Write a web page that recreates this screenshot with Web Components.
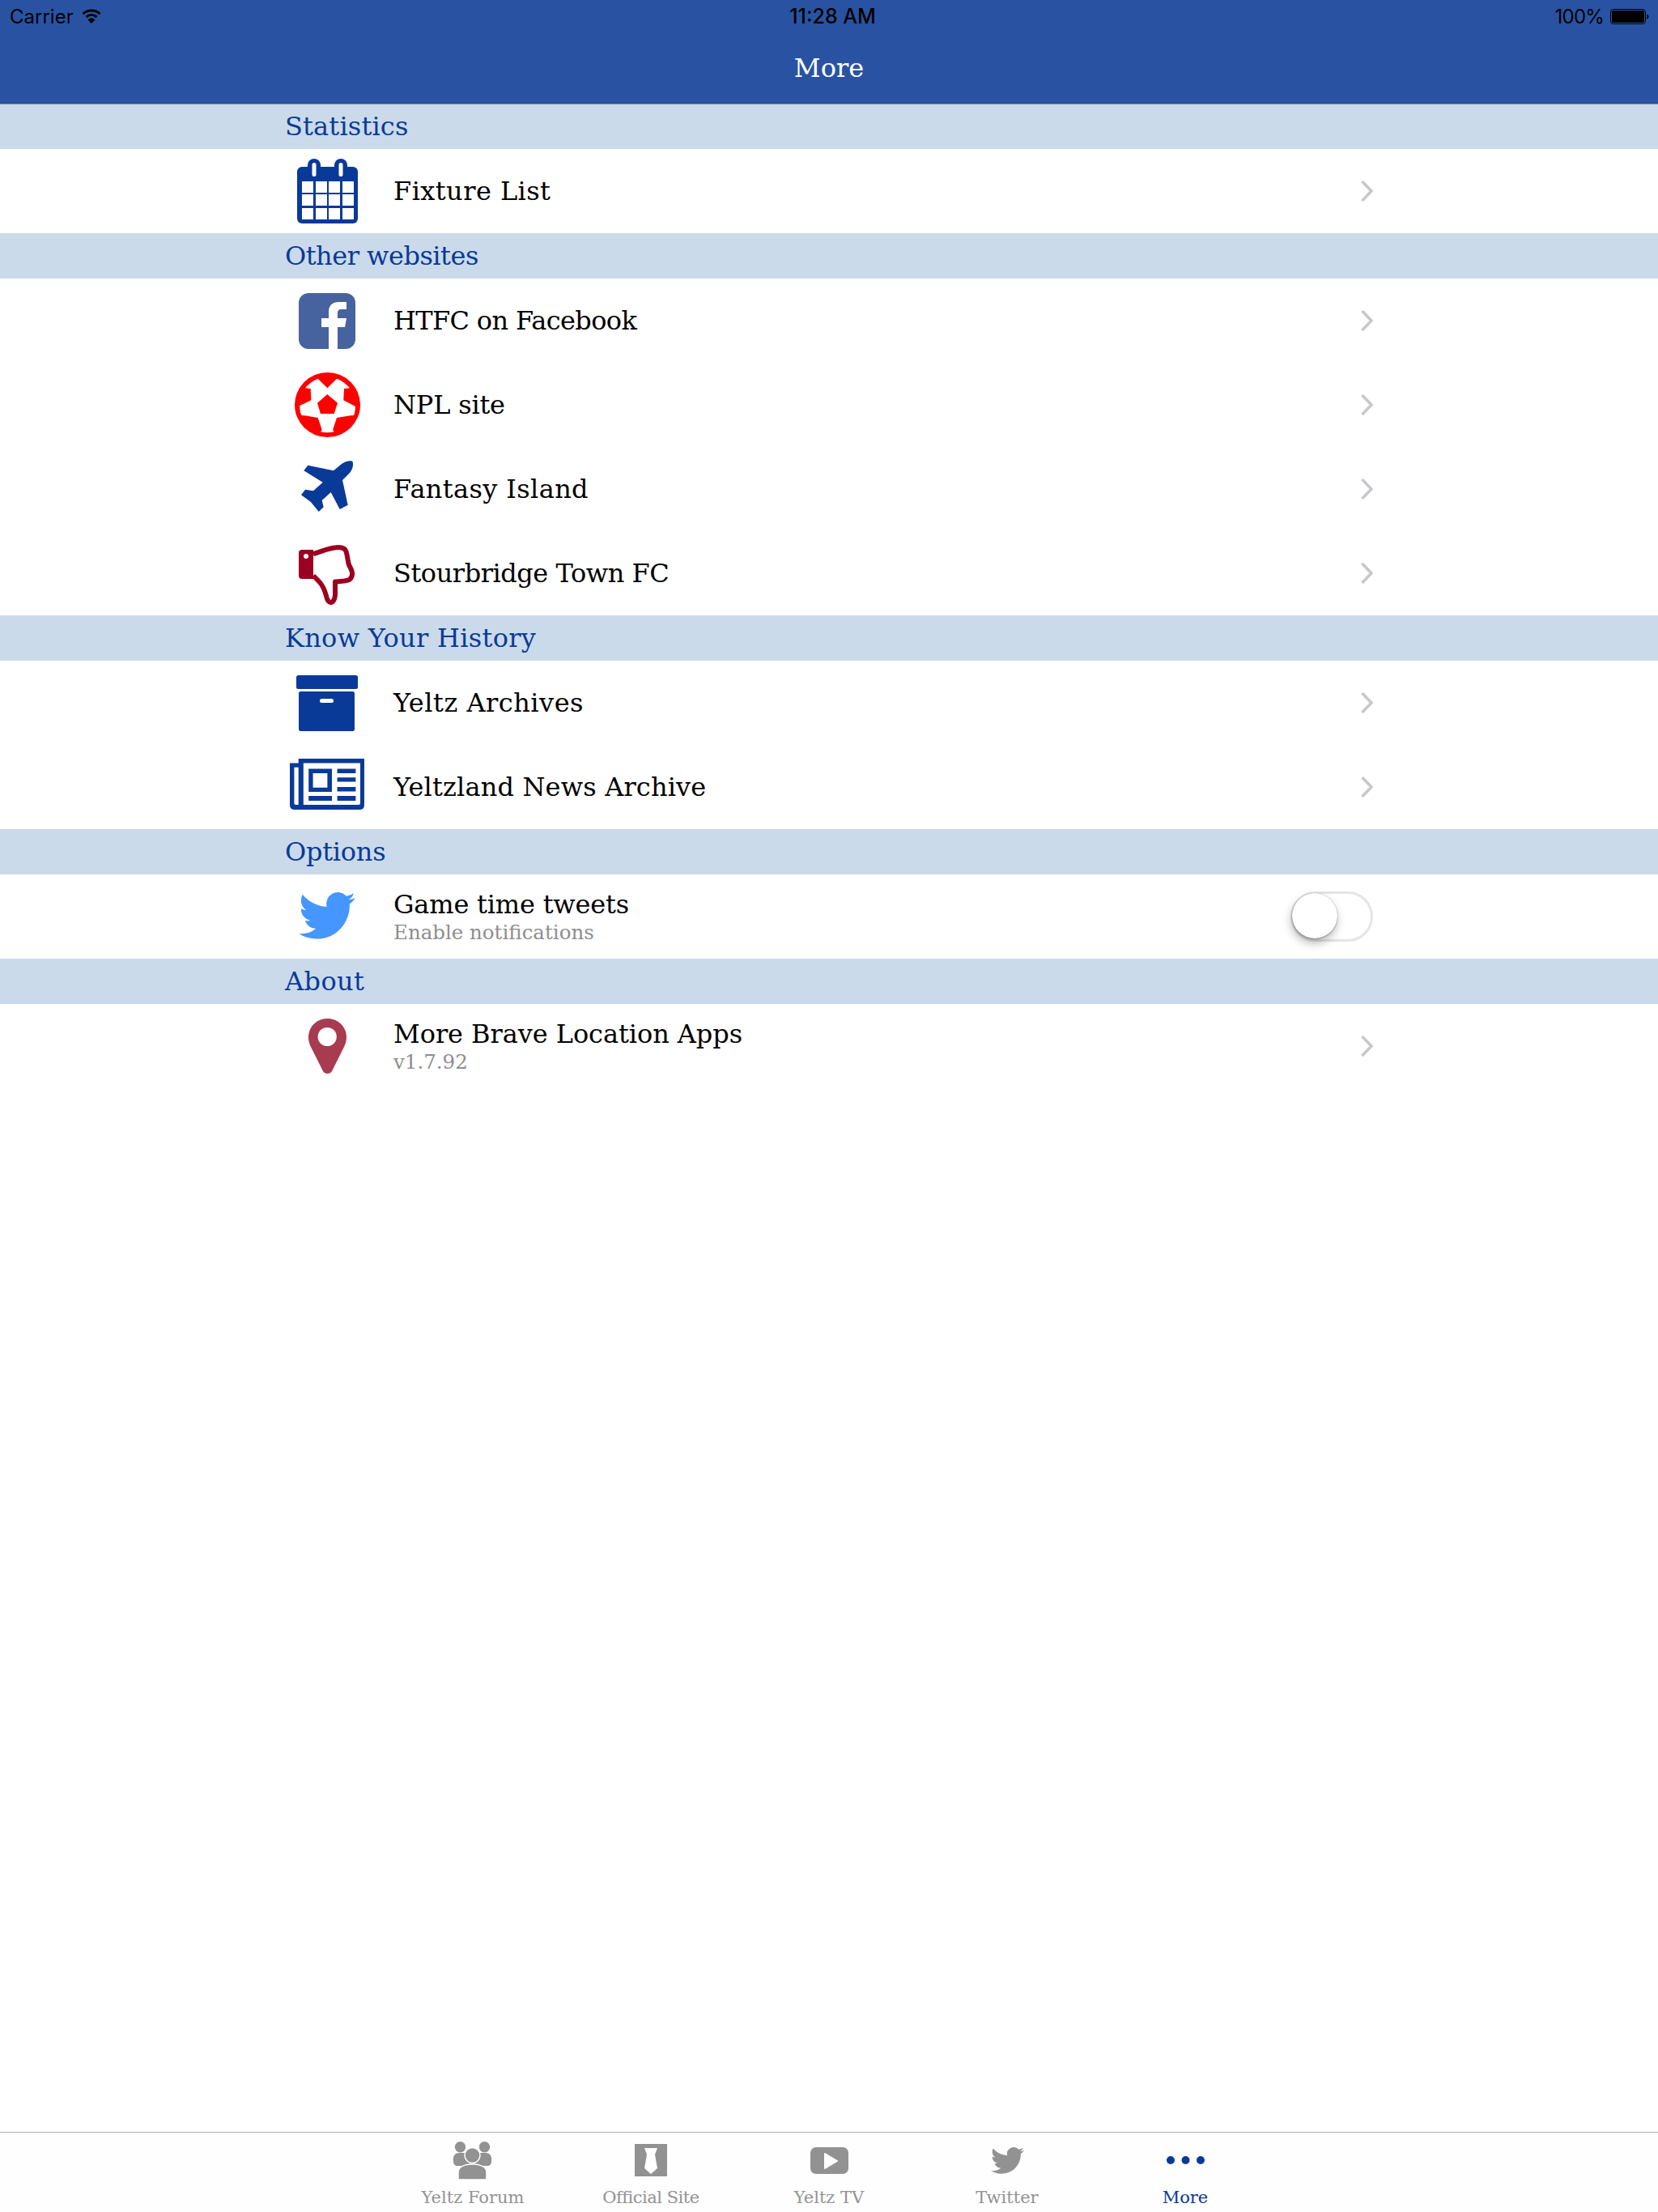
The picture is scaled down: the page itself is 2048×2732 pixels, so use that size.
<!DOCTYPE html>
<html lang="en">
<head>
<meta charset="utf-8">
<title>More</title>
<style>
    html, body { margin: 0; padding: 0; background: #fff; }
    body {
        width: 2048px;
        height: 2732px;
        display: flex;
        flex-direction: column;
        font-family: "DejaVu Serif", serif;
    }
    more-list { flex: 1; }
</style>
</head>
<body>
<nav-header title="More"></nav-header>
<more-list>
    <section-title style="--track:.17px">Statistics</section-title>
    <more-row label="Fixture List" style="--track:.44px"><more-icon name="calendar"></more-icon></more-row>
    <section-title style="--track:-.5px">Other websites</section-title>
    <more-row label="HTFC on Facebook" style="--track:-.65px"><more-icon name="facebook"></more-icon></more-row>
    <more-row label="NPL site" style="--track:-.2px"><more-icon name="ball"></more-icon></more-row>
    <more-row label="Fantasy Island" style="--track:.37px"><more-icon name="plane"></more-icon></more-row>
    <more-row label="Stourbridge Town FC" style="--track:-.46px"><more-icon name="thumb"></more-icon></more-row>
    <section-title style="--track:.3px">Know Your History</section-title>
    <more-row label="Yeltz Archives" style="--track:.5px"><more-icon name="box"></more-icon></more-row>
    <more-row label="Yeltzland News Archive" style="--track:.16px"><more-icon name="news"></more-icon></more-row>
    <section-title style="--track:-.25px">Options</section-title>
    <more-row label="Game time tweets" detail="Enable notifications" no-chevron style="--track:-.2px">
        <more-icon name="twitter"></more-icon>
        <toggle-switch slot="accessory"></toggle-switch>
    </more-row>
    <section-title style="--track:.4px">About</section-title>
    <more-row label="More Brave Location Apps" detail="v1.7.92" style="--track:-.07px"><more-icon name="pin"></more-icon></more-row>
</more-list>
<tab-bar>
    <tab-item label="Yeltz Forum"><more-icon name="people"></more-icon></tab-item>
    <tab-item label="Official Site" style="--track:-.5px"><more-icon name="tie"></more-icon></tab-item>
    <tab-item label="Yeltz TV"><more-icon name="play"></more-icon></tab-item>
    <tab-item label="Twitter"><more-icon name="tabbird"></more-icon></tab-item>
    <tab-item label="More" active><more-icon name="dots"></more-icon></tab-item>
</tab-bar>

<script>
const BLUE = '#0a3a98';
const BIRD = 'M23.953 4.57a10 10 0 01-2.825.775 4.958 4.958 0 002.163-2.723c-.951.555-2.005.959-3.127 1.184a4.92 4.92 0 00-8.384 4.482C7.69 8.095 4.067 6.13 1.64 3.162a4.822 4.822 0 00-.666 2.475c0 1.71.87 3.213 2.188 4.096a4.904 4.904 0 01-2.228-.616v.06a4.923 4.923 0 003.946 4.827 4.996 4.996 0 01-2.212.085 4.936 4.936 0 004.604 3.417 9.867 9.867 0 01-6.102 2.105c-.39 0-.779-.023-1.17-.067a13.995 13.995 0 007.557 2.209c9.053 0 13.998-7.496 13.998-13.985 0-.21 0-.42-.015-.63A9.935 9.935 0 0024 4.59z';

// [width, height, svg body, margin] - sizes measured off the reference,
// margin nudges the icons that don't sit dead centre in their row
const ICONS = {
    calendar: [75, 80, `
        <rect y="10" width="75" height="70" rx="6" fill="${BLUE}"/>
        <rect x="13" width="16" height="24" rx="8" fill="${BLUE}"/>
        <rect x="46" width="16" height="24" rx="8" fill="${BLUE}"/>
        <rect x="18.5" y="5" width="5" height="17" rx="2.5" fill="#fff"/>
        <rect x="51.5" y="5" width="5" height="17" rx="2.5" fill="#fff"/>
        ${[28, 44, 61].map(y => [6, 23, 39, 56].map(x => `<rect x="${x}" y="${y}" width="14" height="14" fill="#fff"/>`).join('')).join('')}`],
    facebook: [70, 69, `
        <rect width="70" height="69" rx="12" fill="#47639f"/>
        <path fill="#fff" d="M37 69V42H28V31H37V23C37 15 42 11 49 11H59V20H53C49 20 48 22 48 25V31H59L57 42H48V69Z"/>`],
    ball: [81, 80, `
        <ellipse cx="40.5" cy="40" rx="40.5" ry="40" fill="#fe0000"/>
        <path fill="#fff" d="M28.7 7.7L40.3 19.3L52 7.7Q61 11 68 19.3L61 20L60.3 34.3L75 42Q75 48 73 53L68.7 53.3L52 56L47 71L48.7 73.3Q40 75 32 73.3L33.7 71L28.7 56L13 53.3L8.5 53Q6 48 6.3 41L20.3 34.3L19.7 20L13 19.3Q20 11 28.7 7.7Z"/>
        <path fill="#fe0000" d="M40.3 27L53 37.7L48.7 51H32L28 37.7Z"/>`],
    plane: [64, 63, `
        <path fill="${BLUE}" d="M40 12.3L8.3 5.7L3.3 12.3L26.7 26.7L15 37.3L5 35.7L0 42.3L11.7 50.7L21.7 63L27.7 57.3L25.7 49L36.7 39L47.7 60L57.7 54.7L51 24L60 15C64 10 65 4 63.3 .7C60 -.5 54 1 50 4Z"/>`, '0 0 7px'],
    thumb: [70, 74, `
        <path fill="none" stroke="#9b0020" stroke-width="6" stroke-linejoin="round" d="M18 11C26 9 36 4 46 3.2C52 2.5 57 4 58.5 8C60 13 60.5 18 61.5 23C62.5 27 65.5 30 66 34C66.5 38 65 41 62.5 43C58 45 52 45 45 45.5L45 62C44.5 68 42 71 39.5 71C37 71 35 68 34 63C32 55 29 49 24 44L18 38"/>
        <path fill="#9b0020" d="M4 6H18V42H4Q0 42 0 38V10Q0 6 4 6Z"/>
        <circle cx="9" cy="14" r="3" fill="#fff"/>`, '4px 0 0'],
    box: [76, 69, `
        <rect width="76" height="17" rx="2.5" fill="${BLUE}"/>
        <rect x="3" y="20" width="69" height="49" rx="2.5" fill="${BLUE}"/>
        <rect x="29" y="29" width="17" height="5" rx="2.5" fill="#fff"/>`],
    news: [92, 63, `
        <path fill="${BLUE}" fill-rule="evenodd" d="M10.7 0H92V57Q92 63 86 63H6Q0 63 0 57V5.4H10.7ZM16.8 5.4V57H85Q87 57 87 55V5.4ZM5.4 10.7V55Q5.4 57 7.5 57H10.7V10.7Z"/>
        <path fill="${BLUE}" fill-rule="evenodd" d="M23.2 12.5H52V41H23.2ZM28.6 17.9V35.7H46.4V17.9Z"/>
        <path fill="${BLUE}" d="M58.6 12.5H81.4V17.9H58.6ZM58.6 23.2H81.4V28.6H58.6ZM58.6 35H81.4V40.4H58.6ZM58.6 46H81.4V52H58.6ZM23.2 46H52V52H23.2Z"/>`, '0 0 7px'],
    twitter: [70, 58, `
        <svg viewBox="0 2.2 24 19.7" width="70" height="58" preserveAspectRatio="none"><path fill="#4696ff" d="${BIRD}"/></svg>`, '0 0 2px'],
    pin: [47, 69, `
        <path fill="#a83b50" d="M23.5 0C10.5 0 0 10 0 23C0 30 3 35 6 41L18 65C20 69 27 69 29 65L41 41C44 35 47 30 47 23C47 10 36.5 0 23.5 0Z"/>
        <circle cx="23.2" cy="22.5" r="11.6" fill="#fff"/>`],
    people: [50, 47, `
        <g fill="#929292">
            <circle cx="9.5" cy="6.7" r="6.7"/>
            <circle cx="39.5" cy="6.7" r="6.7"/>
            <path d="M1 24C0 18 3 14 8 14H41C46 14 49 18 48 24C48 28 46 30 43 30H6C3 30 1 28 1 24Z"/>
        </g>
        <g fill="#929292" stroke="#fefefe" stroke-width="1.5">
            <circle cx="24.5" cy="17" r="9.5"/>
            <path d="M7 47V38C7 31 15 28 24.5 28C34 28 42 31 42 38V45Q42 47 40 47H9Q7 47 7 45Z"/>
        </g>`],
    tie: [40, 40, `
        <rect width="40" height="40" fill="#929292"/>
        <path fill="#fff" d="M12 5H28L25 13L28 30L20 37L12 30L15 13Z"/>`],
    play: [47, 33, `
        <rect width="47" height="33" rx="7" fill="#929292"/>
        <path fill="#fff" stroke="#fff" stroke-width="2" stroke-linejoin="round" d="M18 8L33 17L18 26Z"/>`],
    tabbird: [41, 33, `
        <svg viewBox="0 2.2 24 19.7" width="41" height="33" preserveAspectRatio="none"><path fill="#929292" d="${BIRD}"/></svg>`],
    dots: [47, 10, `
        <circle cx="5" cy="5" r="5" fill="${BLUE}"/>
        <circle cx="23.5" cy="5" r="5" fill="${BLUE}"/>
        <circle cx="42" cy="5" r="5" fill="${BLUE}"/>`],
};

class MoreIcon extends HTMLElement {
    connectedCallback() {
        const [w, h, body, margin] = ICONS[this.getAttribute('name')];
        this.attachShadow({ mode: 'open' }).innerHTML = `
            <style>
                :host { display: block; line-height: 0; margin: ${margin || 0}; }
                svg { display: block; overflow: visible; }
            </style>
            <svg width="${w}" height="${h}" viewBox="0 0 ${w} ${h}">${body}</svg>`;
    }
}

class NavHeader extends HTMLElement {
    connectedCallback() {
        this.attachShadow({ mode: 'open' }).innerHTML = `
            <style>
                /* hairline hangs over the first section header */
                :host { display: block; position: relative; background: #2953a2; box-shadow: 0 1px 0 #7d8ca8; }
                .status {
                    height: 40px;
                    padding: 0 11px 0 12px;
                    display: grid;
                    grid-template-columns: 1fr auto 1fr;
                    align-items: center;
                    font-family: Inter, sans-serif;
                    font-size: 24px;
                    color: #000;
                }
                .left, .right { display: flex; align-items: center; }
                .left { gap: 10px; }
                .right { justify-content: flex-end; gap: 8px; }
                .pct { letter-spacing: -.8px; }
                .time { font-size: 25px; font-weight: 500; margin-left: 8px; }
                .title {
                    height: 88px;
                    padding-bottom: 1px;
                    box-sizing: border-box;
                    display: flex;
                    align-items: center;
                    justify-content: center;
                    color: #fff;
                    font-size: 32px;
                }
            </style>
            <div class="status">
                <div class="left">
                    <span>Carrier</span>
                    <svg width="24" height="18" viewBox="0 0 24 18">
                        <path fill="none" stroke="#000" stroke-width="3" d="M1.5 6C7.5 .8 16.5 .8 22.5 6M5.5 10C9.5 6.5 14.5 6.5 18.5 10"/>
                        <path d="M7.5 13.5C10.5 10.5 13.5 10.5 16.5 13.5L12 18Z"/>
                    </svg>
                </div>
                <div class="time">11:28 AM</div>
                <div class="right">
                    <span class="pct">100%</span>
                    <svg width="48" height="19" viewBox="0 0 48 19">
                        <rect x=".5" y=".5" width="43" height="18" rx="3.5" fill="none" stroke="#000"/>
                        <rect x="2" y="2" width="40" height="15" rx="2" fill="#000"/>
                        <path d="M45 6.5Q47.5 7 47.5 9.5T45 12.5Z" fill="#000"/>
                    </svg>
                </div>
            </div>
            <div class="title">${this.getAttribute('title')}</div>`;
    }
}

class MoreList extends HTMLElement {
    constructor() {
        super();
        this.attachShadow({ mode: 'open' }).innerHTML = `
            <style>:host { display: block; background: #fff; }</style>
            <slot></slot>`;
    }
}

class SectionTitle extends HTMLElement {
    constructor() {
        super();
        this.attachShadow({ mode: 'open' }).innerHTML = `
            <style>
                :host {
                    display: flex;
                    align-items: center;
                    height: 56px;
                    padding-left: 352px;
                    background: #cadaea;
                    color: ${BLUE};
                    font-size: 32px;
                    letter-spacing: var(--track, 0);
                }
            </style>
            <slot></slot>`;
    }
}

class MoreRow extends HTMLElement {
    connectedCallback() {
        const detail = this.getAttribute('detail');
        const chevron = this.hasAttribute('no-chevron') ? '' : `
            <svg class="chevron" width="15" height="26" viewBox="0 0 15 26">
                <path fill="none" stroke="#c7c7cc" stroke-width="3.5" d="M1.5 1L13 13L1.5 25"/>
            </svg>`;
        this.attachShadow({ mode: 'open' }).innerHTML = `
            <style>
                :host {
                    display: grid;
                    grid-template-columns: 104px 1fr auto;
                    column-gap: 30px;
                    align-items: center;
                    height: 104px;
                    padding: 0 352px;
                    color: #000;
                }
                .icon { display: flex; justify-content: center; }
                .label { font-size: 32px; line-height: 38px; letter-spacing: var(--track, 0); }
                .detail { font-size: 24.5px; line-height: 30px; margin-top: 1px; color: #8e8e8e; }
                .chevron { display: block; }
            </style>
            <div class="icon"><slot></slot></div>
            <div>
                <div class="label">${this.getAttribute('label')}</div>
                ${detail ? `<div class="detail">${detail}</div>` : ''}
            </div>
            <slot name="accessory">${chevron}</slot>`;
    }
}

class ToggleSwitch extends HTMLElement {
    constructor() {
        super();
        this.attachShadow({ mode: 'open' }).innerHTML = `
            <style>
                :host {
                    display: block;
                    position: relative;
                    box-sizing: border-box;
                    width: 102px;
                    height: 62px;
                    border: 3px solid #e5e5e5;
                    border-radius: 31px;
                    background: #fff;
                }
                .knob {
                    position: absolute;
                    left: -1px;
                    top: -1px;
                    width: 56px;
                    height: 56px;
                    border-radius: 50%;
                    background: #fff;
                    box-shadow: 0 0 1px rgba(0,0,0,.35), -1px 6px 12px rgba(0,0,0,.28), 0 1px 2px rgba(0,0,0,.25);
                }
            </style>
            <div class="knob"></div>`;
    }
}

class TabBar extends HTMLElement {
    constructor() {
        super();
        this.attachShadow({ mode: 'open' }).innerHTML = `
            <style>
                :host {
                    display: flex;
                    justify-content: center;
                    height: 99px;
                    background: #fefefe;
                    border-top: 1px solid #b2b2b2;
                    box-sizing: border-box;
                }
            </style>
            <slot></slot>`;
    }
}

class TabItem extends HTMLElement {
    connectedCallback() {
        this.attachShadow({ mode: 'open' }).innerHTML = `
            <style>
                :host {
                    display: flex;
                    flex-direction: column;
                    align-items: center;
                    width: 220px;
                    color: #929292;
                }
                :host([active]) { color: ${BLUE}; }
                .icon { height: 68px; display: flex; align-items: center; }
                .label { font-size: 21px; line-height: 24px; letter-spacing: var(--track, 0); }
            </style>
            <div class="icon"><slot></slot></div>
            <div class="label">${this.getAttribute('label')}</div>`;
    }
}

customElements.define('more-icon', MoreIcon);
customElements.define('nav-header', NavHeader);
customElements.define('more-list', MoreList);
customElements.define('section-title', SectionTitle);
customElements.define('more-row', MoreRow);
customElements.define('toggle-switch', ToggleSwitch);
customElements.define('tab-bar', TabBar);
customElements.define('tab-item', TabItem);
</script>
</body>
</html>
